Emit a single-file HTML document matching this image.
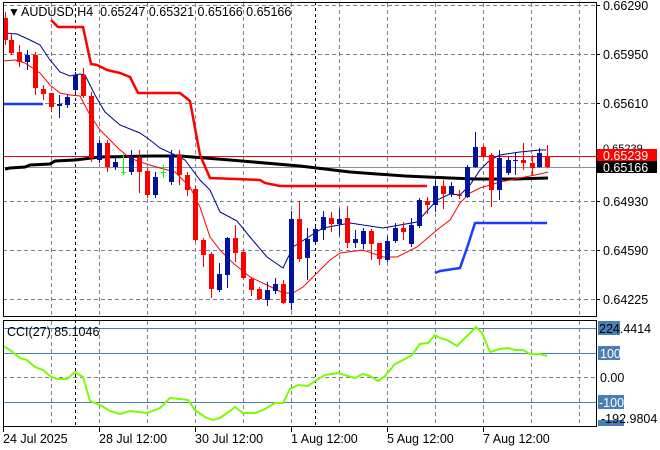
<!DOCTYPE html><html><head><meta charset="utf-8"><style>
body{margin:0;background:#fff;width:660px;height:450px;overflow:hidden}
svg{display:block;font-family:"Liberation Sans",sans-serif;font-size:12.5px}
</style></head><body>
<svg id="s" width="660" height="450" xmlns="http://www.w3.org/2000/svg">
<rect width="660" height="450" fill="#fff"/>
<g id="grid" stroke="#7a8290" stroke-dasharray="4,3" stroke-width="1"></g>
<line x1="75.5" y1="2" x2="75.5" y2="426" stroke="#000" stroke-dasharray="3,3"/>
<line x1="315.5" y1="2" x2="315.5" y2="426" stroke="#000" stroke-dasharray="3,3"/>
<line x1="3" y1="156.5" x2="596" y2="156.5" stroke="#f00"/>
<line x1="3" y1="167.5" x2="596" y2="167.5" stroke="#8a929c"/>
<polyline fill="none" stroke="#000" stroke-width="3" points="5,169 10,168 25,167 30,165 50,164 55,161 75,160 100,157 150,156 180,156 230,160 300,166 350,172 405,176 450,178 475,179 515,179 548,178"/>
<polyline fill="none" stroke="#f00" stroke-width="2.5" points="51,20 58,27 83,27 91,64 97,65 107,70 120,73 130,77 138,93 180,93 185,97 190,101 200,155 210,178 260,180 265,183 280,186 427,186"/>
<polyline fill="none" stroke="#1a3cff" stroke-width="2.5" points="3,104 43,104"/>
<polyline fill="none" stroke="#1a3cff" stroke-width="2.5" points="435,273 440,271 460,268 468,245 475,223 547,223"/>
<polyline fill="none" stroke="#00008b" stroke-width="1" points="5,33 17,34 30,40 40,45 50,60 60,72 70,76 80,74 85,75 95,95 105,112 120,125 140,133 150,140 160,148 175,155 185,160 200,180 210,190 220,212 237,221 250,237 267,257 283,268 293,247 307,238 323,228 350,223 383,228 417,222 437,200 450,194 460,195 470,185 480,170 490,160 500,155 520,152 540,150 546,150"/>
<polyline fill="none" stroke="#f00" stroke-width="1" points="3,61 15,60 25,63 40,73 50,85 60,93 70,95 80,96 90,115 100,130 110,140 120,150 130,158 140,162 160,168 175,172 190,187 200,207 210,237 220,250 233,263 250,277 267,285 283,293 293,293 303,287 317,273 330,260 340,253 363,250 383,257 397,257 417,247 437,230 450,220 460,203 470,193 480,188 500,182 520,178 540,174 548,172"/>
<g id="c"></g>
<rect x="3.5" y="2.5" width="593" height="314" fill="none" stroke="#000"/>
<g id="ticks" stroke="#000"></g>
<text x="8" y="16" font-size="12">&#9660;</text>
<text x="21" y="16" font-size="12.5">AUDUSD,H4&#160;&#160;0.65247&#160;0.65321&#160;0.65166&#160;0.65166</text>
<g font-size="12.5">
<text x="603" y="10">0.66290</text>
<text x="603" y="59">0.65950</text>
<text x="603" y="108">0.65610</text>
<text x="603" y="206">0.64930</text>
<text x="603" y="255">0.64590</text>
<text x="603" y="304">0.64225</text>
<text x="603" y="152" font-size="11">0.65239</text>
<rect x="597" y="149" width="60" height="12" fill="#f00"/>
<text x="603" y="160" fill="#fff">0.65239</text>
<rect x="597" y="161" width="60" height="12" fill="#000"/>
<text x="603" y="172" fill="#fff">0.65166</text>
</g>
<g stroke="#4a7fb5" stroke-width="1"><line x1="3" y1="328.5" x2="596" y2="328.5"/><line x1="3" y1="353.5" x2="596" y2="353.5"/><line x1="3" y1="402.5" x2="596" y2="402.5"/></g>
<line x1="3" y1="377.5" x2="596" y2="377.5" stroke="#7a8290" stroke-dasharray="4,3"/>
<polyline fill="none" stroke="#7cfc00" stroke-width="2" points="3,346 10,350 20,358 27,360 35,367 43,370 50,376 57,379 67,379 75,372 83,377 90,401 100,405 110,411 120,414 130,411 147,413 160,408 170,398 180,399 188,400 195,410 205,417 213,420 220,418 230,411 235,407 243,413 255,413 265,409 275,403 283,403 290,389 298,385 308,386 315,381 325,375 338,373 348,376 355,378 363,374 370,376 378,381 385,376 395,364 405,359 412,355 420,344 428,343 435,335 440,338 447,340 457,346 467,336 476,327 482,333 490,352 500,349 508,348 515,350 523,350 530,354 540,354 547,356"/>
<rect x="3.5" y="320.5" width="593" height="106" fill="none" stroke="#000"/>
<text x="7" y="336" font-size="12.5">CCI(27) 85.1046</text>
<g font-size="12.5">
<rect x="598" y="321" width="22" height="14" fill="#4a7fb5"/><text x="599" y="333">224.4414</text>
<rect x="598" y="346" width="22" height="14" fill="#4a7fb5"/><text x="600" y="358" fill="#fff">100</text>
<text x="600" y="382">0.00</text>
<rect x="598" y="395" width="26" height="14" fill="#4a7fb5"/><text x="599" y="407" fill="#fff">-100</text>
<rect x="598" y="420" width="26" height="6" fill="#4a7fb5"/><text x="601" y="423">-192.9804</text>
</g>
<g font-size="12.5">
<text x="3" y="443">24 Jul 2025</text>
<text x="99" y="443">28 Jul 12:00</text>
<text x="195" y="443">30 Jul 12:00</text>
<text x="291" y="443">1 Aug 12:00</text>
<text x="387" y="443">5 Aug 12:00</text>
<text x="483" y="443">7 Aug 12:00</text>
</g>
<g stroke="#000"><line x1="3.5" y1="427" x2="3.5" y2="432"/><line x1="99.5" y1="427" x2="99.5" y2="432"/><line x1="195.5" y1="427" x2="195.5" y2="432"/><line x1="291.5" y1="427" x2="291.5" y2="432"/><line x1="387.5" y1="427" x2="387.5" y2="432"/><line x1="483.5" y1="427" x2="483.5" y2="432"/></g>
</svg>
<script>
var NS="http://www.w3.org/2000/svg",g=document.getElementById('grid'),c=document.getElementById('c'),t=document.getElementById('ticks');
function L(p,a){var e=document.createElementNS(NS,'line');for(var k in a)e.setAttribute(k,a[k]);p.appendChild(e);}
function R(p,a){var e=document.createElementNS(NS,'rect');for(var k in a)e.setAttribute(k,a[k]);p.appendChild(e);}
for(var x=51;x<596;x+=48){if(x==75)continue;L(g,{x1:x+.5,y1:3,x2:x+.5,y2:316});L(g,{x1:x+.5,y1:321,x2:x+.5,y2:426});}
[5,54,103,201,250,299].forEach(function(y){L(g,{x1:3,y1:y+.5,x2:596,y2:y+.5});L(t,{x1:596,y1:y+.5,x2:600,y2:y+.5});});
var d=[[5,18,40,12,45,'r'],[11,40,53,33,55,'r'],[19,52,62,45,67,'r'],[27,62,55,50,70,'b'],[35,55,88,52,95,'r'],[43,89,94,85,100,'r'],[51,93,107,93,112,'r'],[59,106,104,95,118,'b'],[67,105,97,95,108,'b'],[75,90,75,72,92,'b'],[83,75,96,68,98,'r'],[91,96,158,92,162,'r'],[99,160,143,140,163,'b'],[107,143,167,140,172,'r'],[115,167,162,158,170,'b'],[123,172,172,153,175,'g'],[131,172,158,150,175,'b'],[139,158,172,150,193,'r'],[147,171,195,168,198,'r'],[155,195,177,172,198,'b'],[163,172,172,165,178,'g'],[171,182,155,150,185,'b'],[179,155,175,150,185,'r'],[187,175,190,172,196,'r'],[195,189,240,186,242,'r'],[203,240,255,238,267,'r'],[211,254,289,252,298,'r'],[219,290,274,263,292,'b'],[227,275,238,237,288,'b'],[235,238,253,225,262,'r'],[243,252,278,250,279,'r'],[251,279,290,277,296,'r'],[259,289,299,287,300,'r'],[267,300,290,282,306,'b'],[275,291,284,278,294,'b'],[283,284,303,280,304,'r'],[291,303,219,211,310,'b'],[299,219,259,201,262,'r'],[307,258,239,228,280,'b'],[315,242,229,226,245,'b'],[323,230,217,211,240,'b'],[331,218,224,212,232,'r'],[339,224,219,209,236,'b'],[347,218,243,206,248,'r'],[355,243,239,230,248,'b'],[363,244,231,228,249,'b'],[371,231,244,229,260,'r'],[379,243,259,243,265,'r'],[387,260,241,236,262,'b'],[395,241,228,223,243,'b'],[403,228,232,222,240,'r'],[411,244,225,218,247,'b'],[419,226,200,198,228,'b'],[427,201,205,197,214,'r'],[435,205,186,180,212,'b'],[443,186,194,180,209,'r'],[451,194,186,182,197,'b'],[459,195,196,190,199,'r'],[467,197,167,165,198,'b'],[475,167,147,132,168,'b'],[483,147,156,145,158,'r'],[491,155,190,153,207,'r'],[499,190,158,150,200,'b'],[508,173,160,157,175,'b'],[515,161,160,152,175,'b'],[523,160,163,143,170,'r'],[532,163,168,155,175,'r'],[539,167,153,148,168,'b'],[547,156,167,145,168,'r']];
d.forEach(function(a){var col=a[5]=='r'?'#f00':a[5]=='b'?'#00139e':'#0f0';var x=a[0];
L(c,{x1:x+.5,y1:a[3],x2:x+.5,y2:a[4],stroke:col});
var top=Math.min(a[1],a[2]),h=Math.max(1,Math.abs(a[2]-a[1]));
if(a[5]=='g'){L(c,{x1:x-2,y1:a[1]+.5,x2:x+3,y2:a[1]+.5,stroke:col});}
else R(c,{x:x-2,y:top,width:5,height:h,fill:col});});
</script>
</body></html>
